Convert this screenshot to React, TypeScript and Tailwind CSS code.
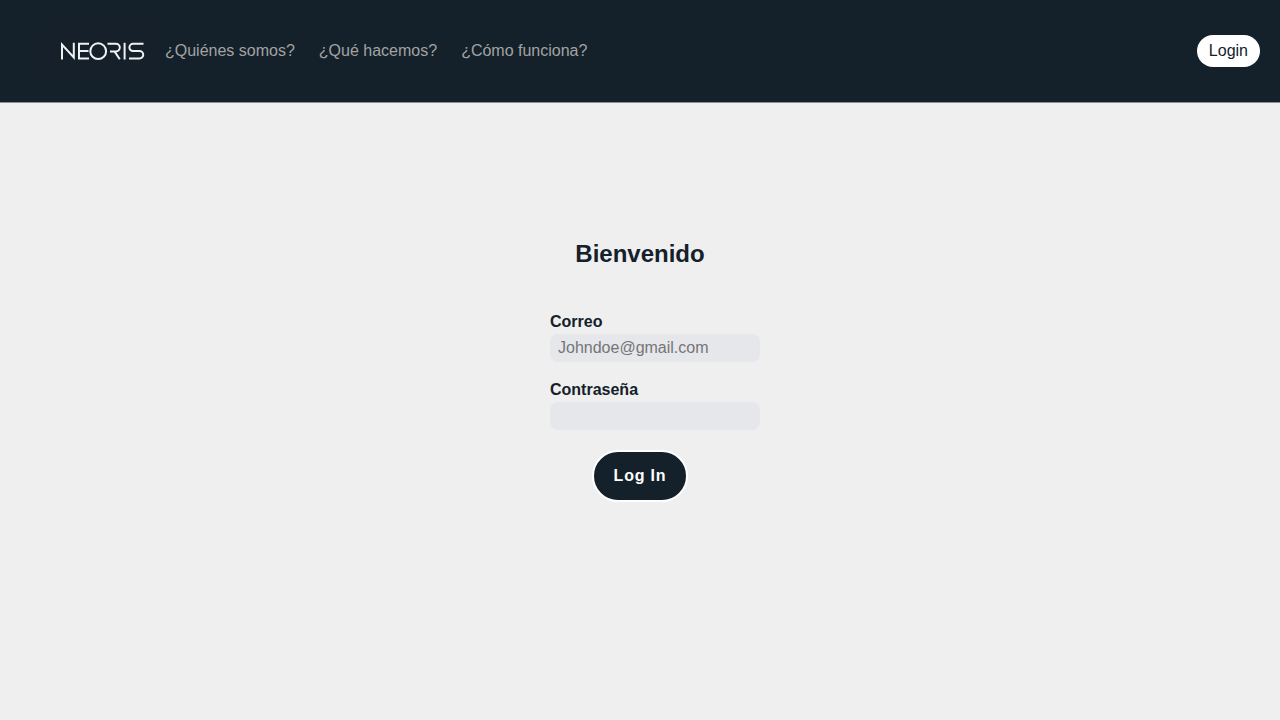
import React from "react";

const links = ["¿Quiénes somos?", "¿Qué hacemos?", "¿Cómo funciona?"];

function Logo() {
  return (
    <svg
      role="img"
      aria-label="Neoris"
      viewBox="0 0 121 62"
      className="h-[62px] w-[121px]"
      fill="none"
      stroke="#eef2f4"
      strokeWidth="2"
    >
      <rect width="121" height="62" fill="#16202b" stroke="none" />
      <path d="M22 39.500V24.500L33.800 37.500V22.800" />
      <path d="M49 23.800H39V38.500H49M39 31H48.500" />
      <circle cx="58.200" cy="31.200" r="7.900" />
      <path d="M67.500 23.800H76A3.800 3.800 0 0 1 76 31.400H70M74.500 31.400L79.800 39.200" />
      <path d="M84.600 22.800V39.500" />
      <path d="M103.500 23.800H93A3.600 3.600 0 0 0 93 31H99.500A3.750 3.750 0 0 1 99.500 38.500H89" />
    </svg>
  );
}

function Field({ id, label, type, placeholder }: { id: string; label: string; type: string; placeholder?: string }) {
  return (
    <div className="flex flex-col">
      <label htmlFor={id} className="font-bold leading-6">
        {label}
      </label>
      <input
        id={id}
        type={type}
        placeholder={placeholder}
        className="h-7 w-full rounded-lg bg-[#e5e7eb] px-2 placeholder:text-[#757575]"
      />
    </div>
  );
}

export default function App() {
  return (
    <div className="min-h-screen bg-[#efefef] font-['Liberation_Sans',Arial,sans-serif] text-base text-[#14212a]">
      <header className="flex items-center justify-between border-b border-[#8b8e93] bg-[#14212a] py-5 pr-5 pl-10">
        <div className="flex items-center gap-1">
          <a href="#inicio">
            <Logo />
          </a>
          <nav className="flex gap-6 text-[#a3a3a3]">
            {links.map((text) => (
              <a key={text} href="#info">
                {text}
              </a>
            ))}
          </nav>
        </div>
        <button type="button" className="rounded-full bg-white px-3 py-1">
          Login
        </button>
      </header>
      <main className="flex flex-col items-center pt-[135px]">
        <h1 className="text-2xl font-bold">Bienvenido</h1>
        <form className="mt-10 flex w-60 flex-col items-center gap-5">
          <div className="flex w-full flex-col gap-4 pl-[30px]">
            <Field id="correo" label="Correo" type="email" placeholder="Johndoe@gmail.com" />
            <Field id="contrasena" label="Contraseña" type="password" />
          </div>
          <button
            type="button"
            className="rounded-full border-2 border-white bg-[#14212a] px-5 py-3 font-bold tracking-wider text-white"
          >
            Log In
          </button>
        </form>
      </main>
    </div>
  );
}
